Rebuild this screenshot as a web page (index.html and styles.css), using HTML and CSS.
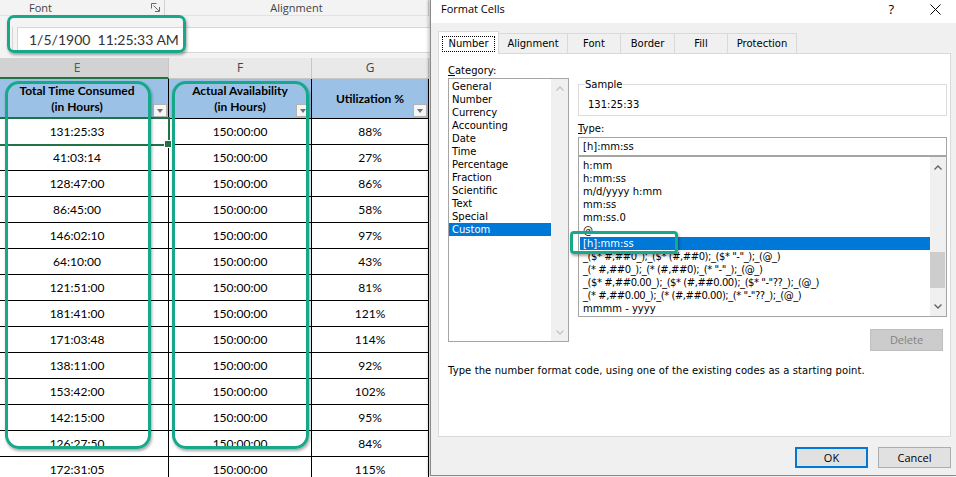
FILE: index.html
```html
<!DOCTYPE html>
<html>
<head>
<meta charset="utf-8">
<title>Format Cells</title>
<link rel="stylesheet" href="styles.css">
</head>
<body>
<div class="app">
  <section class="sheet">
    <div class="ribbon">
      <div class="grp grp-font">
        <span>Font</span>
        <svg class="launcher" width="9" height="9" viewBox="0 0 9 9"><path d="M0.5 5.5V0.5H5.5M2.5 2.5L8 8M8.5 4V8.5H4" fill="none" stroke="#6a6a6a" stroke-width="1"/></svg>
      </div>
      <div class="grp grp-align">Alignment</div>
    </div>
    <div class="fbar">
      <div class="nb"></div>
      <div class="finput">1/5/1900&nbsp; 11:25:33 AM</div>
    </div>
    <div class="colheads">
      <div class="ch ch-e sel">E</div>
      <div class="ch ch-f">F</div>
      <div class="ch ch-g">G</div>
    </div>
    <div class="grid">
      <div class="c h"><span class="ht">Total Time Consumed<br>(in Hours)</span><span class="dd"></span></div>
      <div class="c h"><span class="ht">Actual Availability<br>(in Hours)</span><span class="dd"></span></div>
      <div class="c h"><span class="ht">Utilization %</span><span class="dd"></span></div>

      <div class="c cur">131:25:33</div><div class="c">150:00:00</div><div class="c">88%</div>
      <div class="c">41:03:14</div><div class="c">150:00:00</div><div class="c">27%</div>
      <div class="c">128:47:00</div><div class="c">150:00:00</div><div class="c">86%</div>
      <div class="c">86:45:00</div><div class="c">150:00:00</div><div class="c">58%</div>
      <div class="c">146:02:10</div><div class="c">150:00:00</div><div class="c">97%</div>
      <div class="c">64:10:00</div><div class="c">150:00:00</div><div class="c">43%</div>
      <div class="c">121:51:00</div><div class="c">150:00:00</div><div class="c">81%</div>
      <div class="c">181:41:00</div><div class="c">150:00:00</div><div class="c">121%</div>
      <div class="c">171:03:48</div><div class="c">150:00:00</div><div class="c">114%</div>
      <div class="c">138:11:00</div><div class="c">150:00:00</div><div class="c">92%</div>
      <div class="c">153:42:00</div><div class="c">150:00:00</div><div class="c">102%</div>
      <div class="c">142:15:00</div><div class="c">150:00:00</div><div class="c">95%</div>
      <div class="c">126:27:50</div><div class="c">150:00:00</div><div class="c">84%</div>
      <div class="c">172:31:05</div><div class="c">150:00:00</div><div class="c">115%</div>
    </div>
    <div class="anno anno-fx"></div>
    <div class="anno anno-e"></div>
    <div class="anno anno-f"></div>
  </section>

  <section class="dialog">
    <div class="titlebar">
      <span class="title">Format Cells</span>
      <span class="help">?</span>
      <svg class="close" width="11" height="11" viewBox="0 0 11 11"><path d="M0.5 0.5L10.5 10.5M10.5 0.5L0.5 10.5" stroke="#000" stroke-width="1"/></svg>
    </div>
    <div class="tabs">
      <div class="tab active t-num"><span class="focus">Number</span></div>
      <div class="tab t-align">Alignment</div>
      <div class="tab t-font">Font</div>
      <div class="tab t-border">Border</div>
      <div class="tab t-fill">Fill</div>
      <div class="tab t-prot">Protection</div>
    </div>
    <div class="panel">
      <div class="ptop">
        <div class="lcol">
          <div class="lbl"><u>C</u>ategory:</div>
          <div class="listbox catlist">
            <div class="items">
              <div class="item">General</div>
              <div class="item">Number</div>
              <div class="item">Currency</div>
              <div class="item">Accounting</div>
              <div class="item">Date</div>
              <div class="item">Time</div>
              <div class="item">Percentage</div>
              <div class="item">Fraction</div>
              <div class="item">Scientific</div>
              <div class="item">Text</div>
              <div class="item">Special</div>
              <div class="item sel">Custom</div>
            </div>
            <div class="sbar sbar-dis">
              <div class="sbtn"><svg width="8" height="5" viewBox="0 0 8 5"><path d="M0.5 4.5L4 1L7.5 4.5" fill="none" stroke="#c4c4c4" stroke-width="1.3"/></svg></div>
              <div class="sbtn"><svg width="8" height="5" viewBox="0 0 8 5"><path d="M0.5 0.5L4 4L7.5 0.5" fill="none" stroke="#c4c4c4" stroke-width="1.3"/></svg></div>
            </div>
          </div>
        </div>
        <div class="rcol">
          <fieldset class="sample">
            <legend>Sample</legend>
            <div class="sval">131:25:33</div>
          </fieldset>
          <div class="lbl tlbl"><u>T</u>ype:</div>
          <div class="tinput">[h]:mm:ss</div>
          <div class="listbox typelist">
            <div class="items titems">
              <div class="item">h:mm</div>
              <div class="item">h:mm:ss</div>
              <div class="item">m/d/yyyy h:mm</div>
              <div class="item">mm:ss</div>
              <div class="item">mm:ss.0</div>
              <div class="item">@</div>
              <div class="item sel">[h]:mm:ss</div>
              <div class="item fmt">_($* #,##0_);_($* (#,##0);_($* "-"_);_(@_)</div>
              <div class="item fmt">_(* #,##0_);_(* (#,##0);_(* "-"_);_(@_)</div>
              <div class="item fmt">_($* #,##0.00_);_($* (#,##0.00);_($* "-"??_);_(@_)</div>
              <div class="item fmt">_(* #,##0.00_);_(* (#,##0.00);_(* "-"??_);_(@_)</div>
              <div class="item">mmmm - yyyy</div>
            </div>
            <div class="sbar sbar-type">
              <div class="sbtn up"><svg width="8" height="5" viewBox="0 0 8 5"><path d="M0.5 4.5L4 1L7.5 4.5" fill="none" stroke="#606060" stroke-width="1.3"/></svg></div>
              <div class="track"><div class="thumb"></div></div>
              <div class="sbtn dn"><svg width="8" height="5" viewBox="0 0 8 5"><path d="M0.5 0.5L4 4L7.5 0.5" fill="none" stroke="#606060" stroke-width="1.3"/></svg></div>
            </div>
          </div>
          <div class="btn btn-del">Delete</div>
        </div>
      </div>
      <div class="hint">Type the number format code, using one of the existing codes as a starting point.</div>
    </div>
    <div class="footer">
      <div class="btn btn-ok">OK</div>
      <div class="btn btn-cancel">Cancel</div>
    </div>
    <div class="anno anno-type"></div>
  </section>
</div>
</body>
</html>
```

FILE: styles.css
```css
* { box-sizing: border-box; }
html, body { margin: 0; padding: 0; }
body { width: 956px; height: 477px; overflow: hidden; background: #fff; }

.app { display: flex; width: 956px; height: 477px; }

/* ---------- spreadsheet ---------- */
.sheet {
  position: relative;
  flex: none;
  width: 430px;
  height: 477px;
  overflow: hidden;
  font-family: Lato, "Liberation Sans", sans-serif;
  color: #000;
}
.ribbon {
  display: flex;
  height: 16px;
  background: #f3f3f3;
  border-bottom: 1px solid #e2e2e2;
  font-family: "Open Sans", "Noto Sans", sans-serif;
  font-size: 11px;
  line-height: 15px;
  color: #444;
}
.grp-font {
  width: 165px;
  display: flex;
  align-items: center;
  padding: 0 4px 0 29px;
  border-right: 1px solid #d2d2d2;
}
.launcher { margin-left: auto; }
.grp-align {
  width: 264px;
  text-align: center;
  border-right: 1px solid #d2d2d2;
}
.fbar {
  display: flex;
  height: 42px;
  padding: 11px 0 5px 0;
  background: #f3f3f3;
}
.nb {
  width: 13px;
  border-right: 1px solid #d6d6d6;
}
.finput {
  flex: 1;
  margin-left: 4px;
  background: #fff;
  border: 1px solid #d6d6d6;
  border-right: none;
  padding-left: 11px;
  font-size: 14px;
  line-height: 24px;
  color: #333;
}
.colheads {
  display: flex;
  height: 21px;
  margin-left: -14px;
  background: #e9e9e9;
  font-family: "Open Sans", "Noto Sans", sans-serif;
  font-size: 12px;
  color: #444;
}
.ch {
  text-align: center;
  line-height: 20px;
  border-right: 1px solid #c6c6c6;
  border-bottom: 1px solid #c6c6c6;
}
.ch-e { width: 183px; }
.ch-f { width: 143px; }
.ch-g { width: 117px; }
.ch.sel {
  background: #d2d2d2;
  color: #217346;
  border-bottom: 2px solid #217346;
  line-height: 19px;
}
.grid {
  display: grid;
  grid-template-columns: 183px 143px 117px;
  margin-left: -14px;
}
.c {
  position: relative;
  height: 26px;
  border-right: 1px solid #000;
  border-bottom: 1px solid #000;
  text-align: center;
  font-size: 12px;
  line-height: 25px;
  white-space: nowrap;
}
.c.h {
  height: 40px;
  background: #9bc2e6;
  font-weight: 700;
  display: flex;
  align-items: center;
  justify-content: center;
  line-height: 16px;
}
.dd {
  position: absolute;
  right: 1px;
  bottom: 1px;
  width: 14px;
  height: 13px;
  background: #f6f6f6;
  border: 1px solid #b3b3b3;
}
.dd::after {
  content: "";
  position: absolute;
  left: 3px;
  top: 4px;
  border-left: 3.5px solid transparent;
  border-right: 3.5px solid transparent;
  border-top: 4px solid #707070;
}
.c.cur::after {
  content: "";
  position: absolute;
  top: -2px;
  left: -2px;
  right: -2px;
  bottom: -2px;
  border: 2px solid #217346;
}
.c.cur::before {
  content: "";
  position: absolute;
  right: -4px;
  bottom: -4px;
  width: 6px;
  height: 6px;
  background: #217346;
  border: 1px solid #fff;
  z-index: 2;
}

/* annotations */
.anno {
  position: absolute;
  border: 3px solid #17a88a;
  box-shadow: 1px 2px 3px rgba(0, 0, 0, 0.35);
  z-index: 5;
}
.anno-fx { left: 7px; top: 15px; width: 179px; height: 38px; border-radius: 7px; }
.anno-e { left: 5px; top: 81px; width: 146px; height: 368px; border-radius: 14px; }
.anno-f { left: 172px; top: 81px; width: 137px; height: 368px; border-radius: 14px; }
.anno-type { left: 139px; top: 231px; width: 108px; height: 23px; border-radius: 4px; }

/* ---------- dialog ---------- */
.dialog {
  position: relative;
  flex: none;
  width: 526px;
  height: 476px;
  display: flex;
  flex-direction: column;
  background: #f0f0f0;
  border-left: 1px solid #8a8a8a;
  border-bottom: 1px solid #8a8a8a;
  box-shadow: -2px 0 3px rgba(0, 0, 0, 0.2);
  font-family: "DejaVu Sans", sans-serif;
  font-size: 10px;
  color: #000;
}
.titlebar {
  display: flex;
  align-items: flex-start;
  height: 23px;
  background: #fff;
  padding: 1px 0 0 10px;
  font-family: "Open Sans", "Noto Sans", sans-serif;
  font-size: 11px;
  line-height: 16px;
}
.help { margin-left: auto; font-size: 13px; line-height: 16px; }
.close { margin: 3px 15px 0 36px; }

.tabs {
  display: flex;
  align-items: flex-end;
  height: 23px;
  margin-top: 8px;
  margin-bottom: -1px;
  padding-left: 7px;
  position: relative;
  z-index: 1;
}
.tab {
  height: 20px;
  margin-bottom: 1px;
  margin-left: -1px;
  border: 1px solid #d9d9d9;
  border-bottom: none;
  background: #f0f0f0;
  text-align: center;
  line-height: 19px;
}
.tab.active {
  height: 23px;
  margin-bottom: 0;
  margin-left: 0;
  background: #fff;
  padding-top: 2px;
  position: relative;
  z-index: 2;
}
.focus {
  display: inline-block;
  border: 1px dotted #000;
  padding: 0 5px;
  line-height: 14px;
}
.t-num { width: 61px; }
.t-align { width: 70px; }
.t-font { width: 54px; }
.t-border { width: 55px; }
.t-fill { width: 54px; }
.t-prot { width: 70px; }

.panel {
  margin-left: 7px;
  width: 513px;
  height: 384px;
  background: #fff;
  border: 1px solid #d9d9d9;
  padding: 10px 3px 0 9px;
}
.ptop { display: flex; gap: 9px; }
.lcol { width: 121px; }
.rcol { width: 369px; display: flex; flex-direction: column; }
.lbl { height: 14px; line-height: 14px; }

.listbox {
  display: flex;
  border: 1px solid #a5a5a5;
  overflow: hidden;
}
.catlist { height: 264px; }
.items { flex: 1; padding-top: 1px; overflow: hidden; }
.item {
  height: 13px;
  line-height: 13px;
  padding-left: 3px;
  white-space: nowrap;
}
.item.fmt { letter-spacing: -0.45px; }
.item.sel { background: #0078d7; color: #fff; }

.sbar {
  width: 17px;
  background: #f0f0f0;
  display: flex;
  flex-direction: column;
  justify-content: space-between;
}
.sbtn {
  height: 18px;
  display: flex;
  align-items: center;
  justify-content: center;
}
.sbar-type { width: 16px; }
.sbar-type .sbtn { height: 20px; }
.track { flex: 1; padding-top: 75px; }
.thumb { width: 15px; height: 36px; background: #cdcdcd; }

.sample {
  margin: 14px 0 0 0;
  padding: 0 6px 4px 6px;
  border: 1px solid #dcdcdc;
  min-width: 0;
}
.sample legend { padding: 0; line-height: 13px; }
.sval { margin-top: 7px; padding-left: 3px; line-height: 13px; }
.tlbl { margin-top: 6px; }
.tinput {
  margin-top: 1px;
  height: 19px;
  border: 1px solid #a5a5a5;
  padding-left: 4px;
  line-height: 17px;
}
.typelist { height: 161px; }
.titems { margin-left: 1px; padding-top: 2px; }

.btn {
  font-family: "Open Sans", "Noto Sans", sans-serif;
  font-size: 11px;
  text-align: center;
  width: 73px;
}
.btn-del {
  align-self: flex-end;
  margin: 12px 4px 0 0;
  height: 22px;
  line-height: 20px;
  background: #cccccc;
  border: 1px solid #bfbfbf;
  color: #838383;
}
.hint { margin-top: 13px; line-height: 14px; white-space: nowrap; letter-spacing: 0.1px; }

.footer {
  display: flex;
  justify-content: flex-end;
  gap: 10px;
  padding: 10px 5px 0 0;
}
.btn-ok, .btn-cancel {
  height: 21px;
  background: #e1e1e1;
  color: #000;
}
.btn-ok { border: 2px solid #0078d7; line-height: 17px; }
.btn-cancel { border: 1px solid #adadad; line-height: 19px; }
```
